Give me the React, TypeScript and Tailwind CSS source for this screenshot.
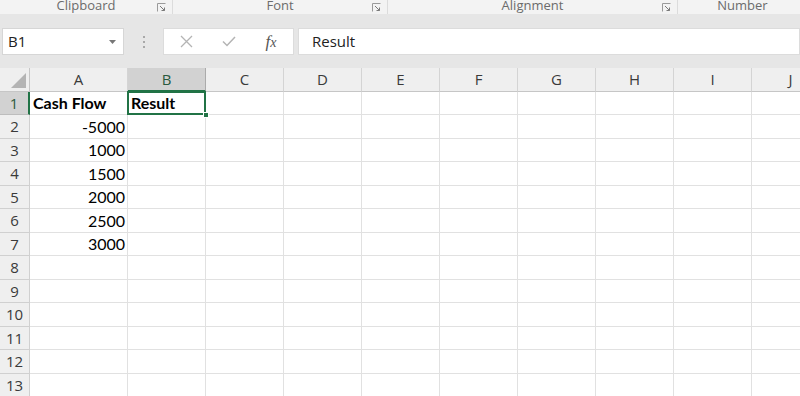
import React from 'react'

const cols = [
  { name: 'A', w: 98 },
  { name: 'B', w: 78 },
  { name: 'C', w: 78 },
  { name: 'D', w: 78 },
  { name: 'E', w: 78 },
  { name: 'F', w: 78 },
  { name: 'G', w: 78 },
  { name: 'H', w: 78 },
  { name: 'I', w: 78 },
  { name: 'J', w: 78 },
]

const cashFlow: Record<number, string> = {
  2: '-5000',
  3: '1000',
  4: '1500',
  5: '2000',
  6: '2500',
  7: '3000',
}

const rows = Array.from({ length: 13 }, (_, i) => i + 1)

function Launcher() {
  return (
    <svg width="9" height="9" viewBox="0 0 9 9" className="shrink-0">
      <path d="M0.5 8.5V0.5H8.5" fill="none" stroke="#9a9a9a" strokeWidth="1" />
      <path d="M3 3L7.5 7.5M7.5 4.5V7.5H4.5" fill="none" stroke="#7a7a7a" strokeWidth="1" />
    </svg>
  )
}

function Group({ label, width, launcher = true }: { label: string; width: number; launcher?: boolean }) {
  return (
    <div className="relative h-full shrink-0 border-r border-[#dcdcdc]" style={{ width }}>
      <div className="absolute inset-x-0 bottom-0 text-center text-[13px] leading-[17px] text-[#6b6b6b]">{label}</div>
      {launcher && <div className="absolute right-[6px] top-[3px]"><Launcher /></div>}
    </div>
  )
}

export default function App() {
  const font = { fontFamily: '"Open Sans", "Noto Sans", sans-serif' }
  const cellFont = { fontFamily: 'Lato, "Liberation Sans", sans-serif' }

  return (
    <div className="w-[800px] h-[396px] overflow-hidden bg-white" style={font}>
      {/* ribbon group labels */}
      <div className="flex h-[14px] overflow-hidden bg-[#f3f3f3]">
        <Group label="Clipboard" width={173} />
        <Group label="Font" width={215} />
        <Group label="Alignment" width={290} />
        <Group label="Number" width={130} launcher={false} />
      </div>
      <div className="h-[14px] bg-[#e6e6e6]" />

      {/* formula bar */}
      <div className="flex h-[27px] bg-[#e6e6e6]">
        <div className="ml-[2px] flex w-[122px] items-center justify-between border border-[#d6d6d6] bg-white pl-[5px] pr-[7px]">
          <span className="text-[15px] text-[#222]">B1</span>
          <svg width="7" height="4" viewBox="0 0 7 4"><path d="M0 0H7L3.5 4Z" fill="#777" /></svg>
        </div>
        <div className="flex w-[39px] items-center justify-center">
          <div className="flex flex-col gap-[3px]">
            <span className="h-[2px] w-[2px] bg-[#a8a8a8]" />
            <span className="h-[2px] w-[2px] bg-[#a8a8a8]" />
            <span className="h-[2px] w-[2px] bg-[#a8a8a8]" />
          </div>
        </div>
        <div className="flex w-[131px] items-center border border-[#dcdcdc] bg-white">
          <div className="flex w-[44px] justify-center">
            <svg width="13" height="13" viewBox="0 0 13 13"><path d="M1 1L12 12M12 1L1 12" stroke="#b4b4b4" strokeWidth="1.3" /></svg>
          </div>
          <div className="flex w-[42px] justify-center">
            <svg width="14" height="11" viewBox="0 0 14 11"><path d="M1 5.5L5 9.5L13 1" fill="none" stroke="#b4b4b4" strokeWidth="1.5" /></svg>
          </div>
          <div className="flex w-[42px] justify-center">
            <span className="text-[17px] italic leading-none text-[#555]" style={{ fontFamily: '"Liberation Serif", serif' }}>
              f<span className="text-[14px]">x</span>
            </span>
          </div>
        </div>
        <div className="ml-[4px] flex flex-1 items-center border border-[#dcdcdc] bg-white pl-[13px]">
          <span className="text-[15px] text-[#222]">Result</span>
        </div>
      </div>
      <div className="h-[13px] bg-[#e6e6e6]" />

      {/* grid */}
      <div className="flex h-[24px] bg-[#efefef]">
        <div className="relative h-full w-[30px] shrink-0 border-r border-b border-[#c6c6c6]">
          <svg className="absolute bottom-[3px] right-[3px]" width="15" height="15" viewBox="0 0 15 15"><path d="M15 0V15H0Z" fill="#b4b4b4" /></svg>
        </div>
        {cols.map((c) => {
          const sel = c.name === 'B'
          return (
            <div
              key={c.name}
              className={`flex h-full shrink-0 items-center justify-center border-r text-[15px] ${
                sel ? 'border-[#ababab] border-b-2 border-b-[#217346] bg-[#d2d2d2] text-[#2a5a3e]' : 'border-[#d4d4d4] border-b border-b-[#c6c6c6] text-[#3a3a3a]'
              }`}
              style={{ width: c.w }}
            >
              {c.name}
            </div>
          )
        })}
      </div>

      {rows.map((r) => {
        const h = r % 2 === 1 ? 23 : 24
        const sel = r === 1
        return (
          <div key={r} className="flex" style={{ height: h }}>
            <div
              className={`flex h-full w-[30px] shrink-0 items-center justify-center border-r border-b text-[15px] ${
                sel ? 'border-b-[#bdbdbd] border-r-2 border-r-[#217346] bg-[#d2d2d2] text-[#2a5a3e]' : 'border-[#d0d0d0] bg-[#efefef] text-[#3a3a3a]'
              }`}
            >
              {r}
            </div>
            {cols.map((c) => {
              const isB1 = sel && c.name === 'B'
              let content: React.ReactNode = null
              if (c.name === 'A' && r === 1) content = <span className="font-bold">Cash Flow</span>
              if (c.name === 'A' && cashFlow[r]) content = cashFlow[r]
              if (isB1) content = <span className="font-bold">Result</span>
              const right = c.name === 'A' && !!cashFlow[r]
              return (
                <div
                  key={c.name}
                  className={`relative flex h-full shrink-0 items-center border-r border-b border-[#e1e1e1] text-[16px] text-black ${
                    right ? 'justify-end pr-[2px]' : 'pl-[3px]'
                  }`}
                  style={{ width: c.w, ...cellFont }}
                >
                  {content}
                  {isB1 && (
                    <>
                      <div className="pointer-events-none absolute inset-[-1px] z-10 border-2 border-[#217346]" />
                      <div className="absolute bottom-[-4px] right-[-4px] z-20 h-[6px] w-[6px] border border-white bg-[#217346]" />
                    </>
                  )}
                </div>
              )
            })}
          </div>
        )
      })}
    </div>
  )
}
